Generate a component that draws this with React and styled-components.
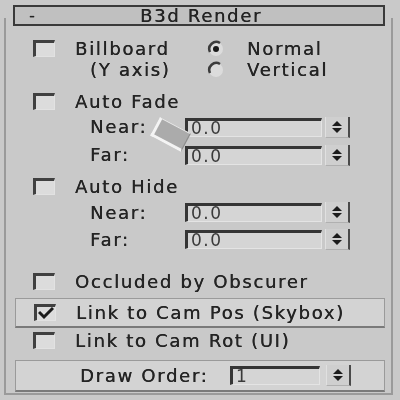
import React from 'react';
import styled, { createGlobalStyle } from 'styled-components';

const Global = createGlobalStyle`
  html, body { margin: 0; padding: 0; background: #c9c9c9; }
  #root { width: 400px; height: 400px; }
`;

const Page = styled.div`
  position: relative;
  width: 400px;
  height: 400px;
  box-sizing: border-box;
  padding: 18px 7px 0 4px;
  background: #c9c9c9;
  font-family: "DejaVu Sans", sans-serif;
  font-size: 18px;
  letter-spacing: 1.7px;
  color: #242424;
  text-shadow: 0.35px 0 0 #242424;
  overflow: hidden;
  filter: blur(0.4px);
`;

const Frame = styled.div`
  height: 377px;
  box-sizing: border-box;
  border-left: 2px solid #9a9a9a;
  border-right: 2px solid #9a9a9a;
  border-bottom: 2px solid #9a9a9a;
  display: flex;
  flex-direction: column;
`;

const Title = styled.div`
  margin: -13px 6px 0 7px;
  height: 21px;
  box-sizing: border-box;
  border: 2px solid #3a3a3a;
  background: #c0c0c0;
  display: flex;
  align-items: center;
  padding: 0 14px;
  line-height: 1;
`;

const Minus = styled.span`
  width: 40px;
  font-size: 16px;
`;

const TitleText = styled.span`
  flex: 1;
  text-align: center;
  margin-right: 40px;
  padding-left: 4px;
`;

const Body = styled.div`
  padding-left: 27px;
  display: flex;
  flex-direction: column;
`;

const Row = styled.div`
  display: flex;
  align-items: center;
  height: ${p => p.$h || 21}px;
  margin-top: ${p => p.$mt || 0}px;
  padding-left: ${p => p.$indent || 0}px;
  white-space: nowrap;
  line-height: 1;
`;

const Group = styled.div`
  display: flex;
  margin-top: ${p => p.$mt || 0}px;
`;

const Col = styled.div`
  display: flex;
  flex-direction: column;
  width: ${p => (p.$w ? `${p.$w}px` : 'auto')};
`;

const Check = styled.span`
  width: 22px;
  height: 17px;
  box-sizing: border-box;
  border-top: 3px solid #404040;
  border-left: 3px solid #404040;
  border-right: 1px solid #e2e2e2;
  border-bottom: 1px solid #e2e2e2;
  background: #dcdcdc;
  margin-right: 20px;
  flex: none;
  display: flex;
  align-items: center;
  justify-content: center;
`;

const RadioWrap = styled.span`
  width: 18px;
  height: 18px;
  margin-right: 22px;
  flex: none;
  display: flex;
`;

const FieldLabel = styled.span`
  width: 95px;
`;

const Field = styled.span`
  width: ${p => p.$w}px;
  height: 19px;
  box-sizing: border-box;
  border-top: 3px solid #353535;
  border-left: 3px solid #353535;
  border-right: 1px solid #e4e4e4;
  border-bottom: 1px solid #e4e4e4;
  background: #d5d5d5;
  color: #3a3a3a;
  text-shadow: none;
  padding-left: 3px;
  display: flex;
  align-items: center;
  font-size: 17px;
  letter-spacing: 1.5px;
`;

const Spin = styled.span`
  width: 25px;
  height: 21px;
  margin-left: ${p => p.$ml || 3}px;
  box-sizing: border-box;
  border-left: 1px solid #e0e0e0;
  border-right: 2px solid #4a4a4a;
  border-bottom: 1px solid #b0b0b0;
  background: #cfcfcf;
  display: flex;
  align-items: center;
  justify-content: center;
`;

const Box = styled.div`
  margin: ${p => p.$mt || 0}px 6px 0 9px;
  height: ${p => p.$h}px;
  box-sizing: border-box;
  border: 1px solid #9a9a9a;
  border-bottom: 2px solid #7a7a7a;
  background: #d3d3d3;
  display: flex;
  align-items: center;
  padding-left: ${p => p.$pl || 0}px;
  white-space: nowrap;
  line-height: 1;
`;

const DrawLabel = styled.span`
  width: 150px;
`;

const Cursor = styled.div`
  position: absolute;
  left: 153px;
  top: 124px;
  width: 35px;
  height: 21px;
  box-sizing: border-box;
  transform: rotate(28deg);
  background: #ababab;
  border-left: 3px solid #f4f4f4;
  border-bottom: 3px solid #f4f4f4;
  border-top: 1px solid #e8e8e8;
  border-right: 1px solid #8c8c8c;
`;

const Radio = ({ on }) => (
  <RadioWrap>
    <svg width="18" height="18" viewBox="0 0 18 18">
      <circle cx="9" cy="9" r="7" fill="#dcdcdc" />
      <path d="M3 12 A7 7 0 0 1 13 3" stroke="#3c3c3c" strokeWidth="2.5" fill="none" />
      {on && <circle cx="9" cy="9" r="3" fill="#1a1a1a" />}
    </svg>
  </RadioWrap>
);

const Spinner = ({ ml }) => (
  <Spin $ml={ml}>
    <svg width="12" height="16" viewBox="0 0 12 16">
      <path d="M1 7 L6 2 L11 7 Z" fill="#1c1c1c" />
      <path d="M1 9 L6 14 L11 9 Z" fill="#1c1c1c" />
    </svg>
  </Spin>
);

const CheckMark = () => (
  <svg width="16" height="13" viewBox="0 0 16 13">
    <path d="M1 5 L6 10 L15 1" stroke="#1a1a1a" strokeWidth="3" fill="none" />
  </svg>
);

const FieldRow = ({ label, value, h, mt }) => (
  <Row $h={h} $mt={mt} $indent={57}>
    <FieldLabel>{label}</FieldLabel>
    <Field $w={137}>{value}</Field>
    <Spinner />
  </Row>
);

export default function App() {
  return (
    <Page>
      <Global />
      <Frame>
        <Title>
          <Minus>-</Minus>
          <TitleText>B3d Render</TitleText>
        </Title>
        <Body>
          <Group $mt={12}>
            <Col $w={174}>
              <Row><Check />Billboard</Row>
              <Row $indent={57}>(Y axis)</Row>
            </Col>
            <Col>
              <Row><Radio on />Normal</Row>
              <Row><Radio />Vertical</Row>
            </Col>
          </Group>
          <Row $mt={11}><Check />Auto Fade</Row>
          <FieldRow label="Near:" value="0.0" h={28} mt={1} />
          <FieldRow label="Far:" value="0.0" h={28} />
          <Row $mt={7}><Check />Auto Hide</Row>
          <FieldRow label="Near:" value="0.0" h={27} mt={2} />
          <FieldRow label="Far:" value="0.0" h={27} />
          <Row $mt={18}><Check />Occluded by Obscurer</Row>
        </Body>
        <Box $mt={6} $h={30} $pl={18}>
          <Check><CheckMark /></Check>Link to Cam Pos (Skybox)
        </Box>
        <Body>
          <Row $mt={2}><Check />Link to Cam Rot (UI)</Row>
        </Body>
        <Box $mt={9} $h={32} $pl={64}>
          <DrawLabel>Draw Order:</DrawLabel>
          <Field $w={90}>1</Field>
          <Spinner ml={6} />
        </Box>
      </Frame>
      <Cursor />
    </Page>
  );
}
